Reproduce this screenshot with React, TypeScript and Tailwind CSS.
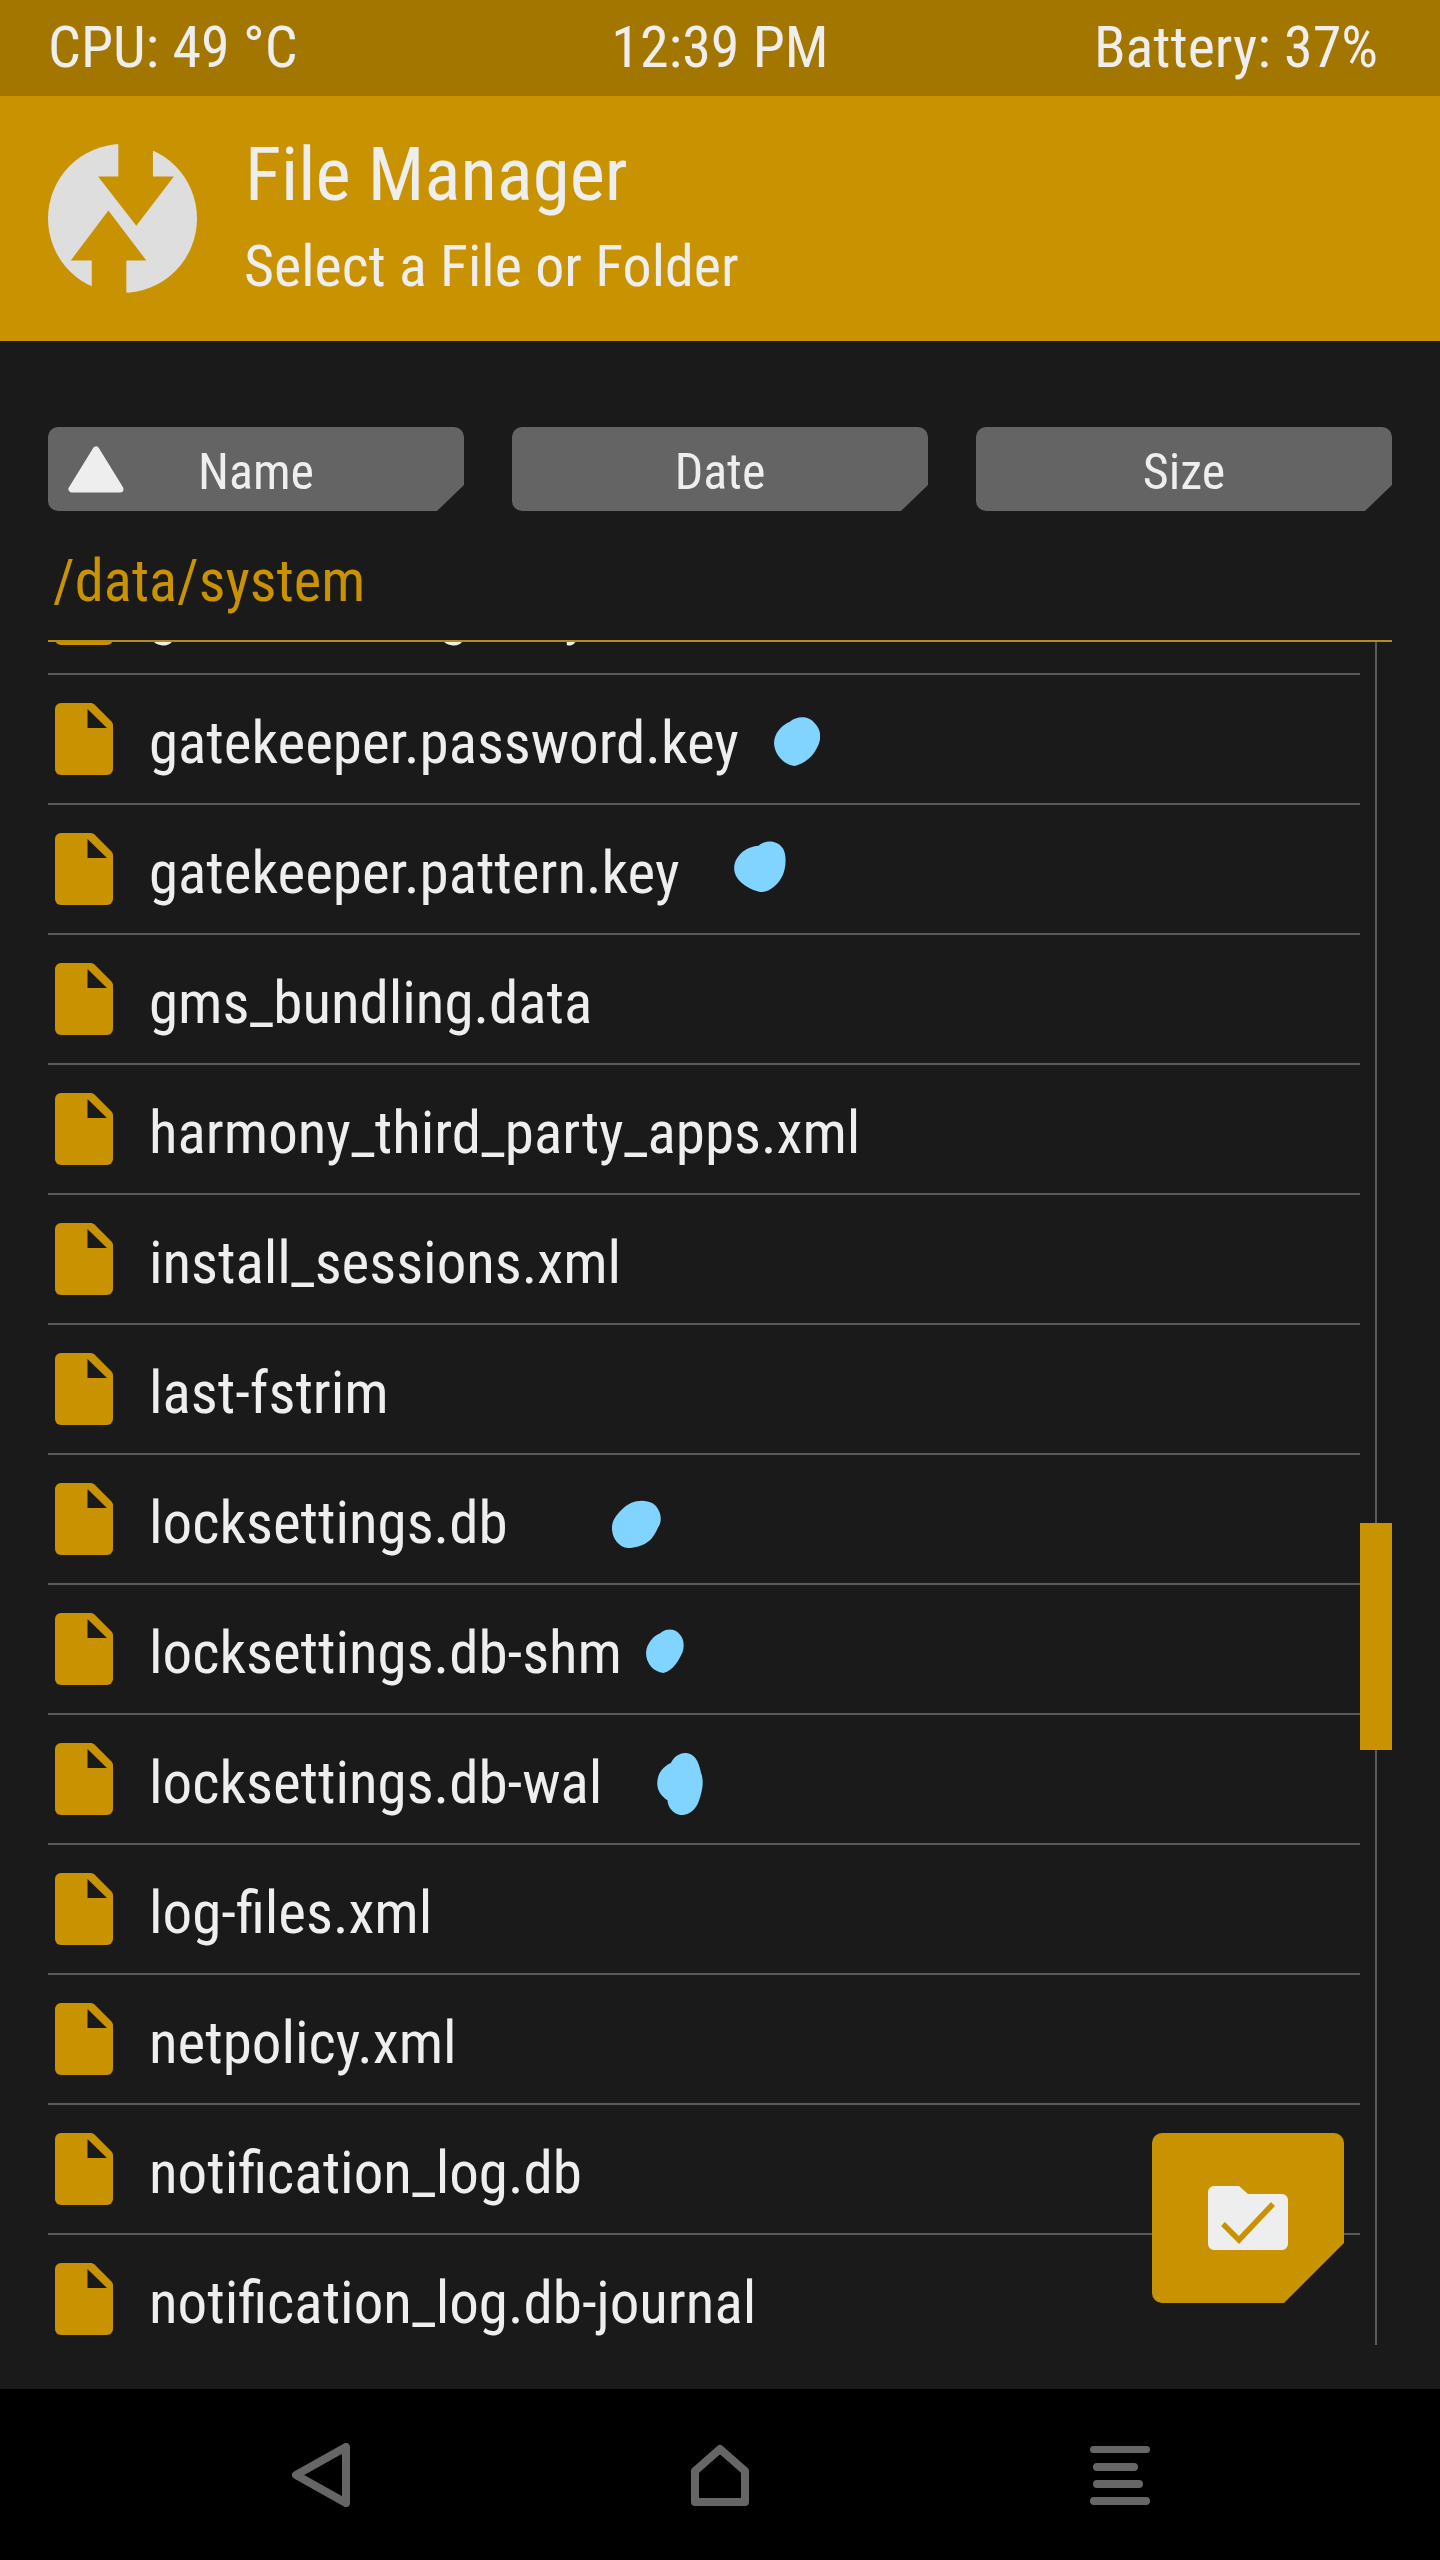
const files = [
  { name: "gamedsettings.key" },
  { name: "gatekeeper.password.key", blob: "blob1" },
  { name: "gatekeeper.pattern.key", blob: "blob2" },
  { name: "gms_bundling.data" },
  { name: "harmony_third_party_apps.xml" },
  { name: "install_sessions.xml" },
  { name: "last-fstrim" },
  { name: "locksettings.db", blob: "blob3" },
  { name: "locksettings.db-shm", blob: "blob4" },
  { name: "locksettings.db-wal", blob: "blob5" },
  { name: "log-files.xml" },
  { name: "netpolicy.xml" },
  { name: "notification_log.db" },
  { name: "notification_log.db-journal" },
];

// scribbles painted over the file names in the screenshot
const blobs: Record<string, { cls: string; box: string; d: string }> = {
  blob1: {
    cls: "left-[726px] top-[41px] w-[46px] h-[50px]",
    box: "643 108 137 149",
    d: "M690 125C710 108 745 105 765 130C785 150 785 180 770 205C755 235 730 250 705 257C675 255 645 225 643 190C643 160 665 135 690 125Z",
  },
  blob2: {
    cls: "left-[686px] top-[35px] w-[52px] h-[52px]",
    box: "522 480 155 156",
    d: "M595 497C615 480 650 478 668 505C680 525 678 560 668 585C655 615 625 638 600 636C570 630 522 605 522 565C522 530 555 500 595 497Z",
  },
  blob3: {
    cls: "left-[564px] top-[45px] w-[49px] h-[48px]",
    box: "97 120 146 143",
    d: "M125 150C150 122 190 115 218 130C240 145 248 175 238 195C232 205 225 225 210 240C190 258 165 263 145 263C115 260 95 230 97 200C98 180 110 165 125 150Z",
  },
  blob4: {
    cls: "left-[598px] top-[44px] w-[38px] h-[44px]",
    box: "198 507 113 131",
    d: "M240 520C255 505 285 503 300 525C313 540 312 565 305 580C295 600 280 630 250 638C220 635 198 610 198 578C200 550 220 528 240 520Z",
  },
  blob5: {
    cls: "left-[609px] top-[37px] w-[46px] h-[63px]",
    box: "231 875 137 189",
    d: "M272 908C285 880 320 865 345 892C355 905 358 918 362 935C372 960 368 990 355 1025C345 1050 325 1066 300 1064C280 1062 262 1040 262 1020C240 1005 228 985 232 960C235 935 250 918 272 908Z",
  },
};

function FileIcon() {
  return (
    <svg viewBox="0 0 58 72" className="w-[58px] h-[72px] shrink-0">
      <path
        d="M6 0H36Q38 0 39.500 1.500L56.500 18.500Q58 20 58 22V66A6 6 0 0 1 52 72H6A6 6 0 0 1 0 66V6A6 6 0 0 1 6 0Z"
        fill="#c99200"
      />
      <path d="M32.500 6V25H52Z" fill="#1a1a1a" />
    </svg>
  );
}

function Logo() {
  return (
    <svg viewBox="85 72 447 448" className="w-[149px] h-[149px] shrink-0">
      <circle cx="308.500" cy="296" r="224" fill="#dedede" />
      <path d="M296 60H400V170H463L350 318L235 170H296Z" fill="#c99200" />
      <path d="M266 272L380 422H320V530H216V422L153 422Z" fill="#c99200" />
    </svg>
  );
}

function SortButton({ label, arrow }: { label: string; arrow?: boolean }) {
  return (
    <div className="relative h-[84px] flex items-center justify-center pt-[6px] rounded-[10px] bg-[#646464] text-[50px] leading-none [clip-path:polygon(0_0,100%_0,100%_calc(100%-26px),calc(100%-27px)_100%,0_100%)]">
      {arrow && (
        <svg viewBox="0 0 56 47" className="absolute left-[20px] top-[19px] w-[56px] h-[47px]">
          <path d="M28 4L4 43H52Z" fill="#eeeeee" stroke="#eeeeee" strokeWidth="7" strokeLinejoin="round" />
        </svg>
      )}
      <span>{label}</span>
    </div>
  );
}

function FileRow({ name, blob }: { name: string; blob?: string }) {
  const mark = blob ? blobs[blob] : null;
  return (
    <div className="relative h-[130px] shrink-0 flex items-center gap-[36px] pl-[7px] border-b-2 border-[#5a5a5a]">
      <FileIcon />
      <span className="pt-[6px] text-[59px] leading-none whitespace-nowrap">{name}</span>
      {mark && (
        <svg viewBox={mark.box} className={`absolute ${mark.cls}`}>
          <path d={mark.d} fill="#80d4ff" />
        </svg>
      )}
    </div>
  );
}

export default function App() {
  return (
    <div className="relative w-[1440px] h-[2560px] flex flex-col bg-[#1a1a1a] text-[#eeeeee] font-[Roboto,sans-serif] [font-stretch:75%] overflow-hidden">
      {/* status bar */}
      <div className="h-[96px] shrink-0 flex items-center justify-between px-[48px] pb-[2px] bg-[#a37600] text-[58px] leading-none">
        <span className="w-[400px]">CPU: 49 °C</span>
        <span>12:39 PM</span>
        <span className="w-[400px] pr-[14px] text-right">Battery: 37%</span>
      </div>

      {/* title */}
      <div className="h-[245px] shrink-0 flex items-center gap-[48px] pl-[48px] pb-[8px] bg-[#c99200]">
        <div className="mt-[8px]">
          <Logo />
        </div>
        <div className="flex flex-col gap-[22px]">
          <span className="text-[75px] leading-[80px]">File Manager</span>
          <span className="-ml-[1px] text-[58px] leading-[60px]">Select a File or Folder</span>
        </div>
      </div>

      {/* sort buttons + path */}
      <div className="shrink-0 px-[48px] pt-[86px]">
        <div className="grid grid-cols-3 gap-[48px]">
          <SortButton label="Name" arrow />
          <SortButton label="Date" />
          <SortButton label="Size" />
        </div>
        <div className="h-[131px] flex items-center pl-[5px] pt-[12px] border-b-2 border-[#b98c14] text-[58.5px] text-[#c99200]">
          /data/system
        </div>
      </div>

      {/* file list */}
      <div className="h-[1703px] shrink-0 flex px-[48px]">
        <div className="w-[1312px] flex flex-col overflow-hidden">
          <div className="flex flex-col -mt-[97px]">
            {files.map((f) => (
              <FileRow key={f.name} name={f.name} blob={f.blob} />
            ))}
          </div>
        </div>
        <div className="relative w-[32px]">
          <div className="mx-auto w-0.5 h-full bg-[#5a5a5a]" />
          <div className="absolute top-[881px] left-0 w-[32px] h-[227px] bg-[#c99200]" />
        </div>
      </div>

      {/* select folder button */}
      <div className="absolute right-[96px] bottom-[257px] w-[192px] h-[170px] flex items-center justify-center rounded-[10px] bg-[#c99200] [clip-path:polygon(0_0,100%_0,100%_calc(100%-60px),calc(100%-60px)_100%,0_100%)]">
        <svg viewBox="0 0 80 64" className="w-[80px] h-[64px]">
          <path
            d="M6 0H31L40 8H74A6 6 0 0 1 80 14V58A6 6 0 0 1 74 64H6A6 6 0 0 1 0 58V6A6 6 0 0 1 6 0Z"
            fill="#eeeeee"
          />
          <path d="M15 38L31 54L65 18" fill="none" stroke="#c99200" strokeWidth="5.500" />
        </svg>
      </div>

      {/* nav bar */}
      <div className="h-[171px] mt-auto shrink-0 flex items-center justify-center gap-[340px] bg-black">
        <svg viewBox="0 0 60 64" className="w-[60px] h-[64px]">
          <path d="M56 4V60L6 32Z" fill="none" stroke="#666666" strokeWidth="8" strokeLinejoin="round" />
        </svg>
        <svg viewBox="0 0 60 64" className="w-[60px] h-[64px]">
          <path d="M30 6L5 28V59H55V28Z" fill="none" stroke="#666666" strokeWidth="8" strokeLinejoin="round" />
        </svg>
        <svg viewBox="0 0 60 64" className="w-[60px] h-[64px]">
          <rect x="0" y="3" width="60" height="7" rx="3.500" fill="#666666" />
          <rect x="3" y="20" width="45" height="8" rx="4" fill="#666666" />
          <rect x="3" y="37" width="50" height="8" rx="4" fill="#666666" />
          <rect x="0" y="54" width="60" height="8" rx="4" fill="#666666" />
        </svg>
      </div>
    </div>
  );
}
